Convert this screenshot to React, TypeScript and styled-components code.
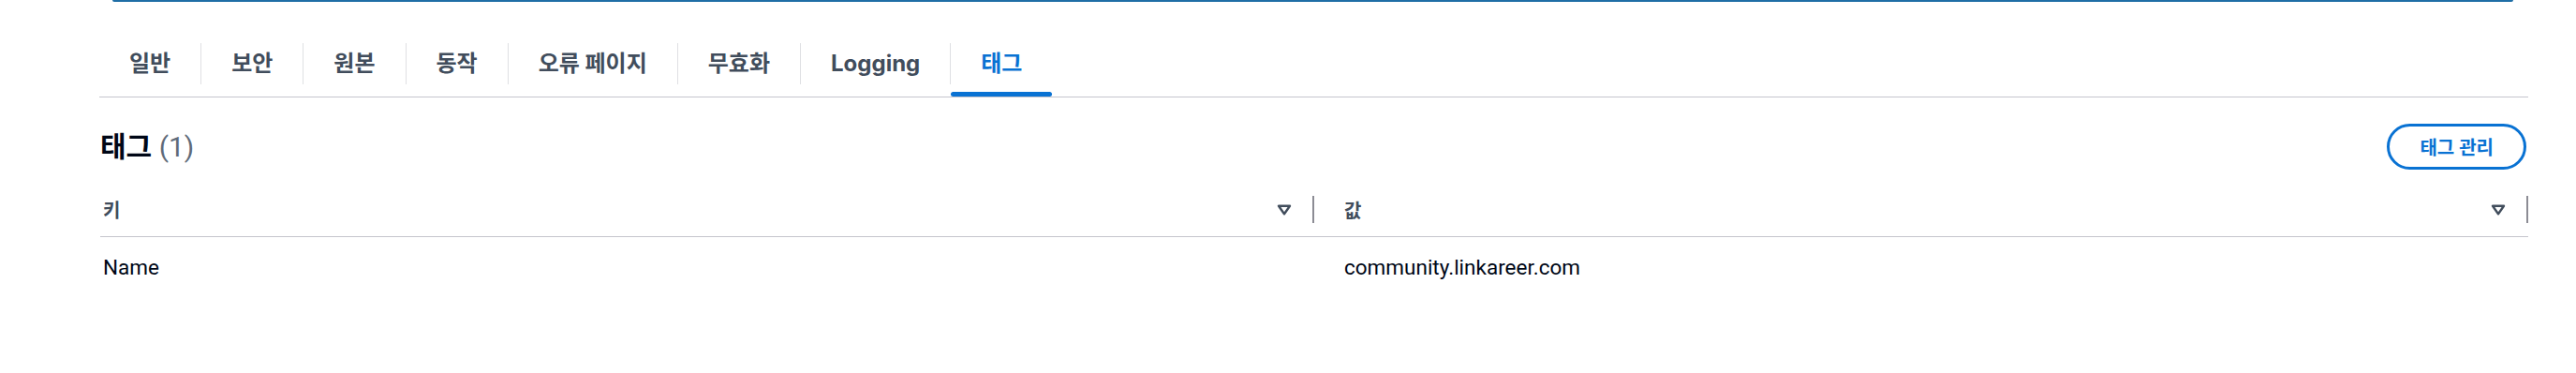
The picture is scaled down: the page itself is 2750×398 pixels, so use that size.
import React from "react";
import styled, { createGlobalStyle } from "styled-components";

const GlobalStyle = createGlobalStyle`
  html, body { margin: 0; padding: 0; background: #ffffff; }
  body {
    font-family: Roboto, "Noto Sans CJK KR", sans-serif;
    -webkit-font-smoothing: antialiased;
  }
  * { box-sizing: border-box; }
`;

const Page = styled.div`
  width: 2750px;
  height: 398px;
  overflow: hidden;
  background: #ffffff;
`;

const TopEdge = styled.div`
  height: 2px;
  margin: 0 67px 0 120px;
  background: #1f6ea6;
  border-radius: 0 0 2px 2px;
`;

const Content = styled.div`
  padding: 0 51px 0 106px;
`;

const TabList = styled.ul`
  display: flex;
  margin: 34px 0 0;
  padding: 0;
  list-style: none;
  border-bottom: 1px solid #c6c6cd;
`;

const Tab = styled.li<{ $active?: boolean }>`
  position: relative;
  padding: 10px 0 13px;
  &::after {
    content: "";
    display: ${(p) => (p.$active ? "block" : "none")};
    position: absolute;
    left: 0;
    right: 0;
    bottom: 0;
    height: 5px;
    border-radius: 3px;
    background: #0972d3;
  }
`;

const TabLabel = styled.span<{ $active?: boolean; $last?: boolean }>`
  display: block;
  padding: 0 32px;
  line-height: 44px;
  font-family: Inter, "Noto Sans CJK KR", sans-serif;
  font-size: 24px;
  font-weight: 700;
  color: ${(p) => (p.$active ? "#0972d3" : "#414d5c")};
  border-right: ${(p) => (p.$last ? "none" : "1px solid #dfe0e3")};
  white-space: nowrap;
`;

const HeaderRow = styled.div`
  display: flex;
  justify-content: space-between;
  align-items: center;
  margin-top: 28px;
  padding-left: 1px;
`;

const Heading = styled.h2`
  margin: 0;
  font-size: 30px;
  line-height: 36px;
  font-weight: 700;
  color: #000716;
`;

const Counter = styled.span`
  font-weight: 400;
  color: #5f6b7a;
`;

const OutlineButton = styled.button`
  height: 49px;
  padding: 0 32px;
  margin-right: 2px;
  border: 3px solid #0972d3;
  border-radius: 25px;
  background: #ffffff;
  color: #0972d3;
  font-family: inherit;
  font-size: 20px;
  font-weight: 700;
  white-space: nowrap;
`;

const Table = styled.div`
  display: grid;
  grid-template-columns: 1fr 1fr;
  margin: 14px 0 0 1px;
`;

const HeaderCell = styled.div<{ $first?: boolean }>`
  display: flex;
  align-items: center;
  height: 58px;
  padding-left: ${(p) => (p.$first ? 3 : 32)}px;
  border-bottom: 1px solid #c6c6cd;
`;

const HeaderLabel = styled.span`
  flex: 1;
  font-size: 20px;
  font-weight: 700;
  color: #414d5c;
`;

const SortIcon = styled.svg`
  width: 16px;
  height: 12px;
  margin-right: 22px;
  flex: none;
`;

const Resizer = styled.span`
  width: 2px;
  height: 29px;
  background: #8c8c94;
  flex: none;
`;

const BodyCell = styled.div<{ $first?: boolean }>`
  display: flex;
  align-items: center;
  height: 64px;
  padding-left: ${(p) => (p.$first ? 3 : 32)}px;
  font-size: 22.5px;
  color: #000716;
`;

const tabs = ["일반", "보안", "원본", "동작", "오류 페이지", "무효화", "Logging", "태그"];
const activeTab = "태그";

const Sort = () => (
  <SortIcon viewBox="0 0 16 12">
    <path
      d="M2 1.8 H14 L8 10.2 Z"
      fill="none"
      stroke="#414d5c"
      strokeWidth="2.4"
      strokeLinejoin="round"
    />
  </SortIcon>
);

const columns = ["키", "값"];
const rows = [["Name", "community.linkareer.com"]];

export default function App() {
  return (
    <Page>
      <GlobalStyle />
      <TopEdge />
      <Content>
        <TabList>
          {tabs.map((t, i) => (
            <Tab key={t} $active={t === activeTab}>
              <TabLabel $active={t === activeTab} $last={i === tabs.length - 1}>
                {t}
              </TabLabel>
            </Tab>
          ))}
        </TabList>
        <HeaderRow>
          <Heading>
            태그 <Counter>(1)</Counter>
          </Heading>
          <OutlineButton>태그 관리</OutlineButton>
        </HeaderRow>
        <Table>
          {columns.map((c, i) => (
            <HeaderCell key={c} $first={i === 0}>
              <HeaderLabel>{c}</HeaderLabel>
              <Sort />
              <Resizer />
            </HeaderCell>
          ))}
          {rows.map((r) =>
            r.map((v, i) => (
              <BodyCell key={v} $first={i === 0}>
                {v}
              </BodyCell>
            ))
          )}
        </Table>
      </Content>
    </Page>
  );
}
